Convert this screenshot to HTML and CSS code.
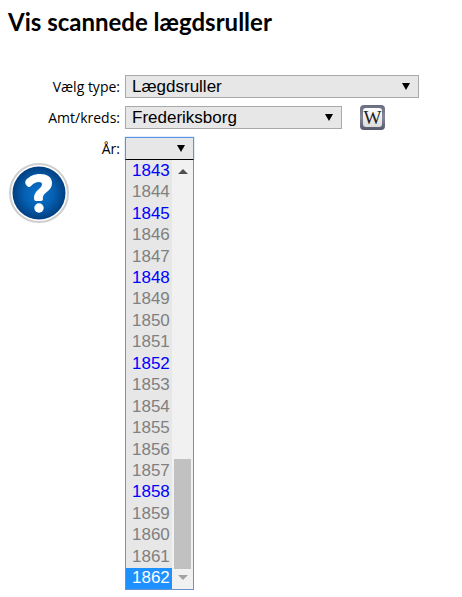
FILE: index.html
```html
<!DOCTYPE html>
<html lang="da">
<head>
    <meta charset="UTF-8">
    <meta name="viewport" content="width=device-width, initial-scale=1.0">
    <title>Vis scannede lægdsruller</title>
    <link rel="stylesheet" href="styles.css">
</head>
<body>

    <h1>Vis scannede lægdsruller</h1>

    <form class="search-form">
        <div class="form-row">
            <label for="type">Vælg type:</label>
            <div class="select-box type-box">
                <select id="type">
                    <option>Lægdsruller</option>
                </select>
            </div>
        </div>

        <div class="form-row">
            <label for="county">Amt/kreds:</label>
            <div class="select-box county-box">
                <select id="county">
                    <option>Frederiksborg</option>
                </select>
            </div>
            <a href="#" class="wiki-link" aria-label="Wikipedia">
                <svg width="25" height="25" viewBox="0 0 25 25">
                    <defs>
                        <linearGradient id="frame" x1="0" y1="0" x2="0" y2="1">
                            <stop offset="0" stop-color="#6a6c80"/>
                            <stop offset="0.5" stop-color="#85889a"/>
                            <stop offset="1" stop-color="#55576b"/>
                        </linearGradient>
                        <linearGradient id="face" x1="0" y1="0" x2="0" y2="1">
                            <stop offset="0" stop-color="#ffffff"/>
                            <stop offset="1" stop-color="#dcdcdc"/>
                        </linearGradient>
                    </defs>
                    <rect width="25" height="25" rx="4" fill="url(#frame)"/>
                    <rect x="3" y="3" width="19" height="19" rx="3" fill="url(#face)"/>
                    <text x="12.5" y="19" text-anchor="middle" class="wiki-letter">W</text>
                </svg>
            </a>
        </div>

        <div class="form-row">
            <label for="year">År:</label>
            <div class="select-box year-box">
                <select id="year">
                    <option value=""></option>
                </select>
                <div class="year-menu">
                    <ul class="year-list" role="listbox" aria-label="År">
                        <li role="option" class="available">1843</li>
                        <li role="option">1844</li>
                        <li role="option" class="available">1845</li>
                        <li role="option">1846</li>
                        <li role="option">1847</li>
                        <li role="option" class="available">1848</li>
                        <li role="option">1849</li>
                        <li role="option">1850</li>
                        <li role="option">1851</li>
                        <li role="option" class="available">1852</li>
                        <li role="option">1853</li>
                        <li role="option">1854</li>
                        <li role="option">1855</li>
                        <li role="option">1856</li>
                        <li role="option">1857</li>
                        <li role="option" class="available">1858</li>
                        <li role="option">1859</li>
                        <li role="option">1860</li>
                        <li role="option">1861</li>
                        <li role="option" class="selected" aria-selected="true">1862</li>
                    </ul>
                    <div class="scrollbar">
                        <span class="arrow-up"></span>
                        <span class="thumb"></span>
                        <span class="arrow-down"></span>
                    </div>
                </div>
            </div>
        </div>
    </form>

    <a href="#" class="help-link" aria-label="Hjælp">
        <svg width="62" height="62" viewBox="0 0 62 62">
            <defs>
                <radialGradient id="ball" cx="0.5" cy="0.5" r="0.5">
                    <stop offset="0" stop-color="#0874cc"/>
                    <stop offset="0.55" stop-color="#0560b2"/>
                    <stop offset="1" stop-color="#023f80"/>
                </radialGradient>
            </defs>
            <circle cx="31" cy="31" r="29" fill="#fff" stroke="#cfcfcf" stroke-width="2"/>
            <circle cx="31" cy="31" r="26.5" fill="url(#ball)"/>
            <path d="M18 18 C22 14 26 12 32 12 C39 12 44 15 44 21 C44 30 34 30 35 37 Q35 39 33 39 L28 39 Q26 39 26 36 C26 28 34 27 34 22 C34 19 27 19 23 24 Q21 26 19 24 Q16 21 18 18 Z" fill="#fff"/>
            <circle cx="31" cy="46" r="4.700" fill="#fff"/>
        </svg>
    </a>

</body>
</html>
```
FILE: styles.css
```css
body {
    box-sizing: border-box;
    min-height: 100vh;
    margin: 0;
    padding: 8px;
    background: white;
    color: black;
    font-family: "Open Sans", sans-serif;
    font-size: 14px;
}

h1 {
    margin: 0 0 39px;
    font-family: Lato, sans-serif;
    font-size: 24px;
    line-height: 28px;
    font-weight: bold;
}

/* Form rows */
.search-form {
    display: flex;
    flex-direction: column;
    gap: 8px;
}

.form-row {
    display: flex;
    align-items: center;
    height: 23px;
}

.form-row label {
    flex: 0 0 112px;
    margin-right: 5px;
    text-align: right;
}

/* Select fields */
.select-box {
    position: relative;
    height: 23px;
}

.type-box {
    flex: 0 1 294px;
}

.county-box {
    flex: 0 1 217px;
}

.year-box {
    flex: 0 0 69px;
}

select {
    appearance: none;
    display: block;
    box-sizing: border-box;
    width: 100%;
    height: 100%;
    margin: 0;
    padding: 0 24px 0 6px;
    border: 1px solid #a9a9a9;
    border-radius: 0;
    background: #e7e7e7;
    color: black;
    font-family: "Liberation Sans", Arial, sans-serif;
    font-size: 17px;
    outline: none;
}

.select-box::after {
    content: "";
    position: absolute;
    top: 8px;
    right: 9px;
    border: 4px solid transparent;
    border-top: 7px solid black;
    border-bottom: 0;
    pointer-events: none;
}

.year-box select {
    border: 1px solid #5b93e6;
    box-shadow: 0 0 1px #5b93e6;
}

/* Open year menu */
.year-menu {
    position: absolute;
    top: 100%;
    left: 0;
    z-index: 1;
    box-sizing: border-box;
    width: 100%;
    margin-top: -1px;
    border: 1px solid #6a92cf;
    border-top: 1px solid black;
    display: flex;
    font-family: "Liberation Sans", Arial, sans-serif;
    font-size: 17px;
}

.year-list {
    flex: 1;
    display: grid;
    grid-auto-rows: 1fr;
    height: 429px;
    margin: 0;
    padding: 0;
    list-style: none;
    background: #e7e7e7;
    color: gray;
}

.year-list li {
    display: flex;
    align-items: center;
    min-height: 0;
    padding-left: 6px;
    line-height: 20px;
}

.year-list .available {
    color: blue;
}

.year-list .selected {
    background: #1e90ff;
    color: white;
}

.scrollbar {
    display: flex;
    flex-direction: column;
    align-items: center;
    box-sizing: border-box;
    width: 21px;
    padding: 9px 2px;
    background: #f1f1f1;
}

.arrow-up,
.arrow-down {
    border: 5px solid transparent;
}

.arrow-up {
    border-top: 0;
    border-bottom-color: #505050;
}

.arrow-down {
    border-bottom: 0;
    border-top-color: #a3a3a3;
}

.thumb {
    width: 17px;
    height: 110px;
    margin: auto 0 6px;
    background: #c1c1c1;
}

/* Icons */
.wiki-link {
    height: 25px;
    margin-left: 18px;
}

.wiki-link svg,
.help-link svg {
    display: block;
}

.wiki-letter {
    font-family: "Liberation Serif", serif;
    font-size: 19px;
    fill: #222;
}

.help-link {
    display: block;
    width: 62px;
    margin-top: 2px;
}
```
